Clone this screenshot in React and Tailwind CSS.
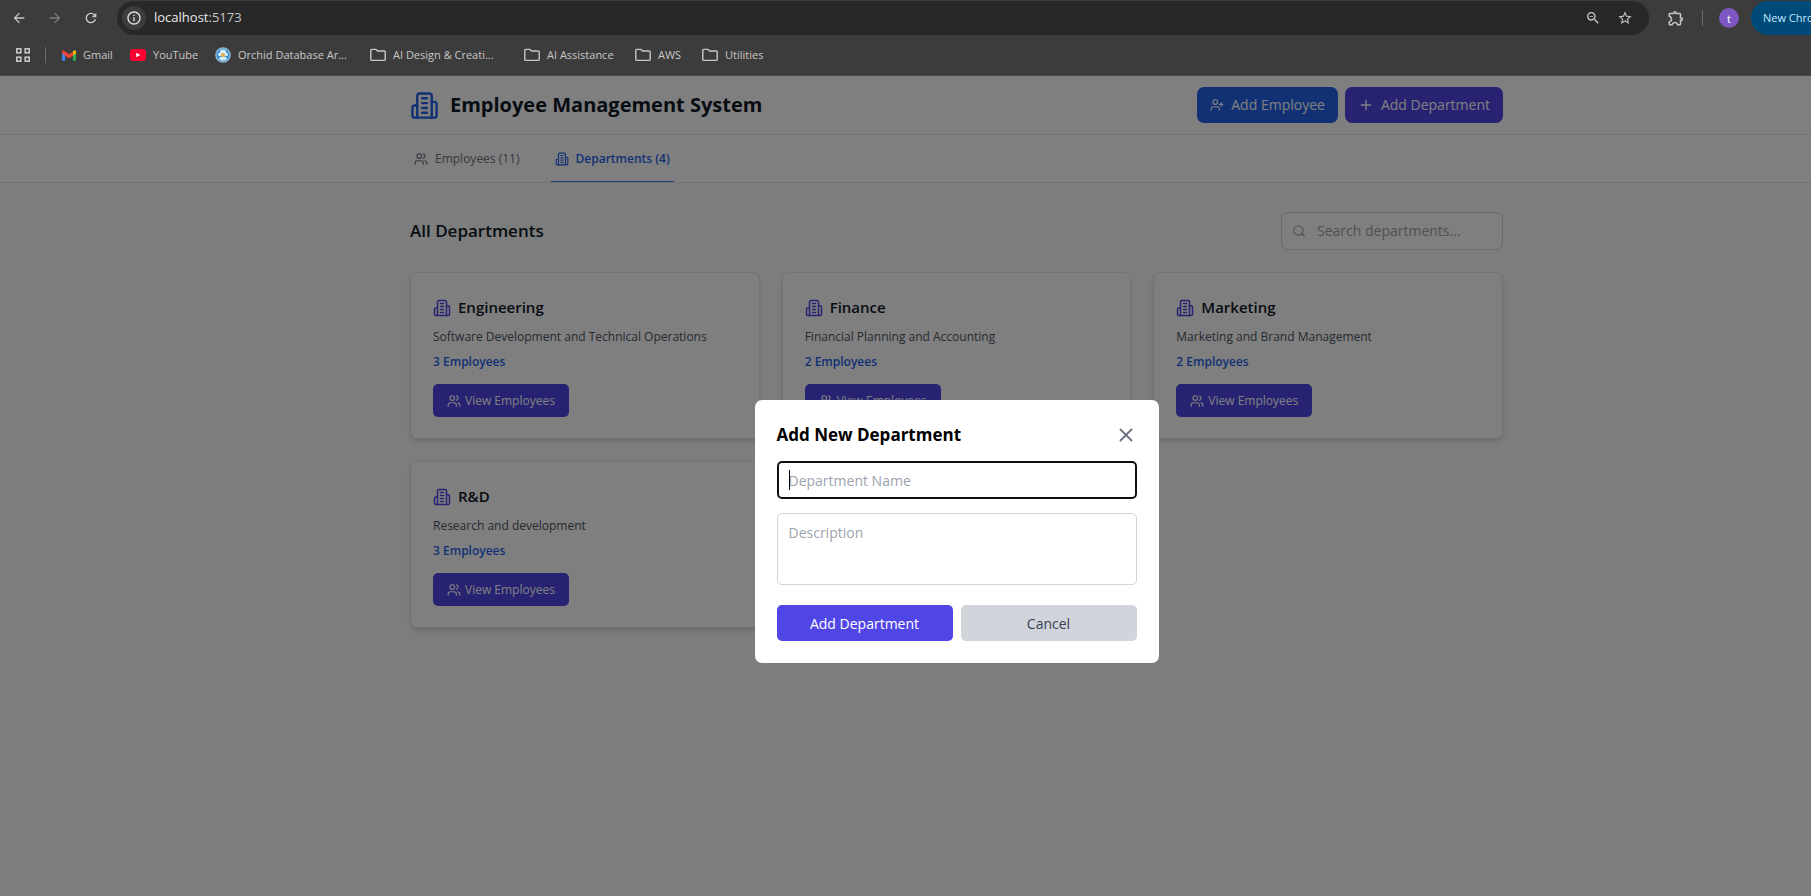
import React from 'react';
import { Users, UserPlus, Plus, Search, X } from 'lucide-react';
import {
  MdArrowBack,
  MdArrowForward,
  MdRefresh,
  MdInfoOutline,
  MdZoomOut,
  MdStarBorder,
  MdOutlineExtension,
} from 'react-icons/md';

const departments = [
  { name: 'Engineering', description: 'Software Development and Technical Operations', count: 3 },
  { name: 'Finance', description: 'Financial Planning and Accounting', count: 2 },
  { name: 'Marketing', description: 'Marketing and Brand Management', count: 2 },
  { name: 'R&D', description: 'Research and development', count: 3 },
];

function Building({ className }) {
  return (
    <svg viewBox="0 0 24 24" fill="none" stroke="currentColor" strokeWidth="2" strokeLinecap="round" strokeLinejoin="round" className={className} aria-hidden="true">
      <path d="M6 22V4a2 2 0 0 1 2-2h8a2 2 0 0 1 2 2v18Z" />
      <path d="M6 12H4a2 2 0 0 0-2 2v6a2 2 0 0 0 2 2h2" />
      <path d="M18 9h2a2 2 0 0 1 2 2v9a2 2 0 0 1-2 2h-2" />
      <path d="M10 6h4M10 10h4M10 14h4M10 18h4" />
    </svg>
  );
}

function FolderIcon() {
  return (
    <svg viewBox="0 0 16 14" className="h-[14px] w-4 shrink-0" fill="none" stroke="#c7c7c7" strokeWidth="1.4" strokeLinejoin="round" aria-hidden="true">
      <path d="M.8 2.6V11.4Q.8 12.4 1.8 12.4H14.2Q15.2 12.4 15.2 11.4V4Q15.2 3 14.2 3H7.6L6 1.4H1.8Q.8 1.4.8 2.6Z" />
    </svg>
  );
}

function GmailIcon() {
  return (
    <svg viewBox="0 0 16 12" className="h-[11px] w-[14px] shrink-0" aria-hidden="true">
      <path fill="#4285f4" d="M0 2.500 3.600 5V12H1.100Q0 12 0 10.900Z" />
      <path fill="#34a853" d="M16 2.500 12.400 5V12H14.900Q16 12 16 10.900Z" />
      <path fill="#fbbc04" d="M12.400 1.300Q14 0 14.900.1 16 .4 16 1.800V3.500L12.400 6.200Z" />
      <path fill="#ea4335" d="M0 3.500V1.800Q0 0 1.700 0L3.600 1.300 8 4.700 12.400 1.300V6.200L8 9.500Z" />
    </svg>
  );
}

function YouTubeIcon() {
  return (
    <svg viewBox="0 0 16 12" className="h-3 w-4 shrink-0" aria-hidden="true">
      <rect width="16" height="12" rx="3" fill="#ff0033" />
      <path d="M6.200 3.800 10.400 6 6.200 8.200Z" fill="#fff" />
    </svg>
  );
}

function OrchidIcon() {
  return (
    <svg viewBox="0 0 16 16" className="size-4 shrink-0" aria-hidden="true">
      <circle cx="8" cy="8" r="7.800" fill="#8fb8d4" />
      <circle cx="8" cy="8" r="6.300" fill="#2f8fd0" />
      <ellipse cx="8" cy="5" rx="3" ry="2.400" fill="#d8ecf7" />
      <ellipse cx="5" cy="7.400" rx="2" ry="1.800" fill="#d8ecf7" />
      <ellipse cx="11" cy="7.400" rx="2" ry="1.800" fill="#d8ecf7" />
      <ellipse cx="8" cy="11.400" rx="3.800" ry="2" fill="#d8ecf7" />
      <circle cx="8" cy="8" r="2" fill="#e2b23c" />
    </svg>
  );
}

function AppsIcon() {
  return (
    <svg viewBox="0 0 14 14" className="size-[14px]" fill="none" stroke="#c7c7c7" strokeWidth="1.600" aria-hidden="true">
      <rect x=".8" y=".8" width="4" height="4" />
      <rect x="9.200" y=".8" width="4" height="4" />
      <rect x=".8" y="9.200" width="4" height="4" />
      <rect x="9.200" y="9.200" width="4" height="4" />
    </svg>
  );
}

function Bookmark({ icon, children, className = '' }) {
  return (
    <a href="#" className={`flex shrink-0 items-center gap-[7px] whitespace-nowrap ${className}`}>
      {icon}
      {children}
    </a>
  );
}

function BrowserBar() {
  return (
    <div className="h-[76px] overflow-hidden border-b border-[#4b4b4b] bg-[#3c3c3c] text-[#c7c7c7]">
      <div className="flex h-[35px] items-center pt-px">
        <div className="flex w-[117px] shrink-0 items-center gap-5 pl-[11px]">
          <button aria-label="Back"><MdArrowBack className="size-4" /></button>
          <button aria-label="Forward" className="text-[#7d7d7d]"><MdArrowForward className="size-4" /></button>
          <button aria-label="Reload"><MdRefresh className="size-4" /></button>
        </div>
        <div className="flex h-[34px] flex-1 items-center rounded-full bg-[#282828] pr-4 pl-[5px]">
          <button aria-label="Site information" className="grid size-6 place-items-center rounded-full bg-[#3c3c3c] text-[#e3e3e3]">
            <MdInfoOutline className="size-4" />
          </button>
          <div className="ml-2 flex-1 text-[13px] text-[#c7c7c7]">
            <span className="text-[#e8e8e8]">localhost</span>:5173
          </div>
          <button aria-label="Zoom" className="mr-4"><MdZoomOut className="size-4" /></button>
          <button aria-label="Bookmark this page"><MdStarBorder className="size-4" /></button>
        </div>
        <div className="flex w-[162px] shrink-0 items-center overflow-hidden pl-[18px]">
          <button aria-label="Extensions" className="shrink-0"><MdOutlineExtension className="size-[18px]" /></button>
          <span className="ml-[17px] h-4 w-px shrink-0 bg-[#6b6b6b]" />
          <button aria-label="Profile" className="ml-4 grid size-5 shrink-0 place-items-center rounded-full bg-[#7e57c2] text-[11px] leading-none text-white">t</button>
          <button className="ml-3 h-[34px] shrink-0 rounded-l-full bg-[#004a77] pl-3 text-[11px] font-medium whitespace-nowrap text-[#c2e7ff]">New Chro</button>
        </div>
      </div>
      <nav aria-label="Bookmarks" className="flex h-10 items-center pl-4 text-[11px]">
        <button aria-label="Apps"><AppsIcon /></button>
        <span className="mr-4 ml-[15px] h-4 w-px bg-[#6b6b6b]" />
        <Bookmark className="w-[68px]" icon={<GmailIcon />}>Gmail</Bookmark>
        <Bookmark className="w-[85px]" icon={<YouTubeIcon />}>YouTube</Bookmark>
        <Bookmark className="w-[155px]" icon={<OrchidIcon />}>Orchid Database Ar...</Bookmark>
        <Bookmark className="w-[154px]" icon={<FolderIcon />}>AI Design &amp; Creati...</Bookmark>
        <Bookmark className="w-[111px]" icon={<FolderIcon />}>AI Assistance</Bookmark>
        <Bookmark className="w-[67px]" icon={<FolderIcon />}>AWS</Bookmark>
        <Bookmark icon={<FolderIcon />}>Utilities</Bookmark>
      </nav>
    </div>
  );
}

function DepartmentCard({ name, description, count }) {
  return (
    <article className="rounded-[7px] border border-[#e5e7eb] bg-white px-[22px] py-[21px] shadow-md">
      <h3 className="flex h-[27px] items-center gap-[7px] text-[15px] font-semibold text-[#111827]">
        <Building className="size-[18px] text-[#4f46e5]" />
        {name}
      </h3>
      <p className="mt-[7px] text-xs leading-[18px] text-[#4b5563]">{description}</p>
      <p className="mt-[7px] text-xs leading-[18px] font-semibold text-[#2563eb]">{count} Employees</p>
      <button className="mt-[13px] flex h-[33px] items-center gap-1 rounded-[5px] bg-[#4f46e5] px-[14px] text-xs text-white">
        <Users className="size-[14px]" />
        View Employees
      </button>
    </article>
  );
}

function AddDepartmentDialog() {
  return (
    <div className="absolute inset-0 flex items-start justify-center bg-black/50 pt-[324px] pl-[102px]">
      <form role="dialog" aria-labelledby="dialog-title" className="w-full max-w-[404px] rounded-[7px] bg-white p-[22px]">
        <div className="flex h-[25px] items-center justify-between">
          <h2 id="dialog-title" className="text-[17px] font-bold text-black">Add New Department</h2>
          <button type="button" aria-label="Close" className="text-[#6b7280]"><X className="size-[22px]" /></button>
        </div>
        <div className="relative mt-[14px]">
          <input aria-label="Department name" placeholder="Department Name" className="block h-[38px] w-full rounded-[5px] border-2 border-[#101010] px-[10px] text-sm text-black placeholder:text-[#9ca3af] focus:outline-none" />
          <span className="absolute top-[9px] left-3 h-5 w-px bg-black" />
        </div>
        <textarea aria-label="Description" placeholder="Description" className="mt-[14px] block h-[72px] w-full resize-none rounded-[5px] border border-[#d1d5db] px-[11px] py-[9px] text-sm text-black placeholder:text-[#9ca3af] focus:outline-none" />
        <div className="mt-5 flex gap-2">
          <button type="submit" className="h-9 flex-1 rounded-[5px] bg-[#4f46e5] pt-[2px] text-sm font-medium text-white">Add Department</button>
          <button type="button" className="h-9 flex-1 rounded-[5px] bg-[#d1d5db] pt-[2px] text-sm text-[#374151]">Cancel</button>
        </div>
      </form>
    </div>
  );
}

export default function App() {
  const container = 'mx-auto w-full max-w-[1151px] px-[29px]';
  return (
    <div className="flex min-h-screen flex-col overflow-x-hidden font-['Open_Sans','Noto_Sans',sans-serif]">
      <BrowserBar />
      <div className="relative flex-1 bg-[#f9fafb]">
        <header className="border-b border-[#e5e7eb] bg-white pl-[102px]">
          <div className={`${container} flex h-[58px] items-center justify-between`}>
            <div className="flex items-center gap-[11px]">
              <Building className="size-[29px] text-[#2563eb]" />
              <h1 className="text-xl font-bold text-[#111827]">Employee Management System</h1>
            </div>
            <div className="flex gap-[7px] text-sm text-white">
              <button className="flex h-9 items-center gap-[7px] rounded-[7px] bg-[#2563eb] px-[13px]">
                <UserPlus className="size-[14px]" />
                Add Employee
              </button>
              <button className="flex h-9 items-center gap-[7px] rounded-[7px] bg-[#4f46e5] px-[13px]">
                <Plus className="size-4" />
                Add Department
              </button>
            </div>
          </div>
        </header>
        <nav aria-label="Sections" className="border-b border-[#e5e7eb] bg-white pl-[102px]">
          <div className={`${container} flex h-[47px] gap-[27px] text-xs font-medium`}>
            <button className="flex items-center gap-[7px] border-b border-transparent px-1 pt-[2px] text-[#6b7280]">
              <Users className="size-[14px]" />
              Employees (11)
            </button>
            <button className="flex items-center gap-[7px] border-b border-[#3b82f6] px-1 pt-[2px] font-semibold text-[#2563eb]">
              <Building className="size-[14px]" />
              Departments (4)
            </button>
          </div>
        </nav>
        <main className="py-[29px] pl-[102px]">
          <div className={container}>
            <div className="flex items-center justify-between">
              <h2 className="text-[17px] font-semibold text-[#111827]">All Departments</h2>
              <label className="flex h-[38px] w-[222px] items-center gap-[11px] rounded-[7px] border border-[#d1d5db] bg-white px-[10px]">
                <Search className="size-[14px] shrink-0 text-[#9ca3af]" />
                <input aria-label="Search departments" placeholder="Search departments..." className="w-full min-w-0 text-sm placeholder:text-[#9ca3af] focus:outline-none" />
              </label>
            </div>
            <div className="mt-[22px] grid grid-cols-3 gap-[22px]">
              {departments.map((d) => (
                <DepartmentCard key={d.name} {...d} />
              ))}
            </div>
          </div>
        </main>
        <AddDepartmentDialog />
      </div>
    </div>
  );
}
